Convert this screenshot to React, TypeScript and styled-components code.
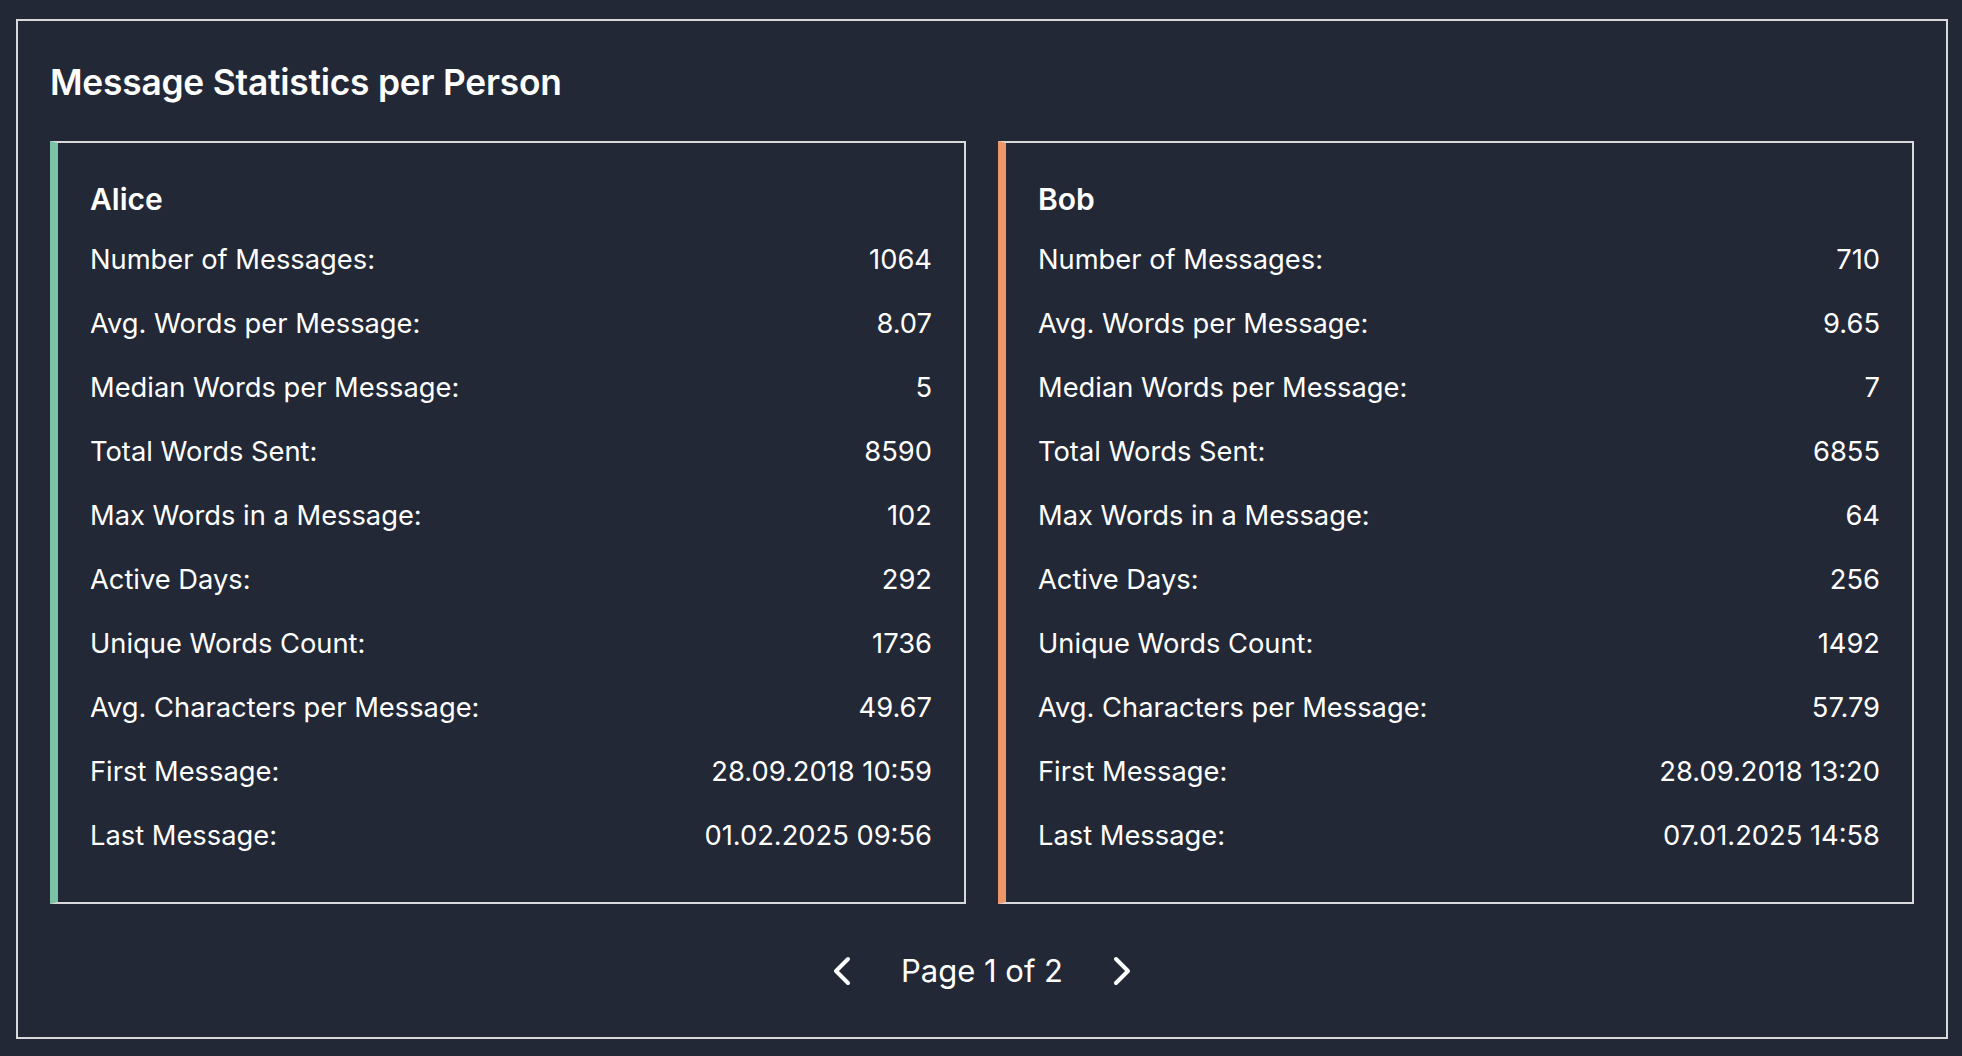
import React from "react";
import styled, { createGlobalStyle } from "styled-components";
import { ChevronLeft, ChevronRight } from "lucide-react";

const GlobalStyle = createGlobalStyle`
  html, body {
    margin: 0;
    padding: 0;
    background: #222836;
  }
  body {
    font-family: Inter, "Noto Sans", "Liberation Sans", sans-serif;
    color: #ffffff;
    -webkit-font-smoothing: antialiased;
  }
`;

const Page = styled.div`
  padding: 19px 14px 17px 16px;
`;

const Panel = styled.section`
  border: 2px solid #d9d9dc;
  padding: 32px 32px 31px;
`;

const Title = styled.h2`
  margin: 0 0 29px;
  font-size: 35.3px;
  line-height: 59px;
  font-weight: 600;
  letter-spacing: -0.2px;
  color: #ffffff;
`;

const CardGrid = styled.div`
  display: grid;
  grid-template-columns: 1fr 1fr;
  gap: 32px;
`;

const Card = styled.article<{ $accent: string }>`
  border: 2px solid #d9d9dc;
  border-left: 8px solid ${(p) => p.$accent};
  padding: 32px 32px 34px 32px;
`;

const Name = styled.h3`
  margin: 0 0 5px;
  font-size: 30px;
  line-height: 48px;
  font-weight: 600;
  color: #ffffff;
`;

const StatList = styled.dl`
  margin: 0;
`;

const StatRow = styled.div`
  display: flex;
  justify-content: space-between;
  align-items: center;
  height: 64px;
  font-size: 27.3px;
  line-height: 64px;
`;

const Label = styled.dt`
  margin: 0;
`;

const Value = styled.dd`
  margin: 0;
  text-align: right;
`;

const Pagination = styled.nav`
  display: flex;
  align-items: center;
  justify-content: center;
  gap: 35px;
  height: 70px;
  margin-top: 32px;
`;

const NavButton = styled.button`
  display: flex;
  align-items: center;
  justify-content: center;
  width: 48px;
  height: 48px;
  padding: 0;
  background: transparent;
  border: none;
  color: #ffffff;
  cursor: pointer;
`;

const PageLabel = styled.span`
  font-size: 31px;
  line-height: 70px;
`;

type Stat = [string, string];

const people: { name: string; accent: string; stats: Stat[] }[] = [
  {
    name: "Alice",
    accent: "#7cc3a5",
    stats: [
      ["Number of Messages:", "1064"],
      ["Avg. Words per Message:", "8.07"],
      ["Median Words per Message:", "5"],
      ["Total Words Sent:", "8590"],
      ["Max Words in a Message:", "102"],
      ["Active Days:", "292"],
      ["Unique Words Count:", "1736"],
      ["Avg. Characters per Message:", "49.67"],
      ["First Message:", "28.09.2018 10:59"],
      ["Last Message:", "01.02.2025 09:56"],
    ],
  },
  {
    name: "Bob",
    accent: "#ee9569",
    stats: [
      ["Number of Messages:", "710"],
      ["Avg. Words per Message:", "9.65"],
      ["Median Words per Message:", "7"],
      ["Total Words Sent:", "6855"],
      ["Max Words in a Message:", "64"],
      ["Active Days:", "256"],
      ["Unique Words Count:", "1492"],
      ["Avg. Characters per Message:", "57.79"],
      ["First Message:", "28.09.2018 13:20"],
      ["Last Message:", "07.01.2025 14:58"],
    ],
  },
];

export default function App() {
  return (
    <>
      <GlobalStyle />
      <Page>
        <Panel>
          <Title>Message Statistics per Person</Title>
          <CardGrid>
            {people.map((p) => (
              <Card key={p.name} $accent={p.accent}>
                <Name>{p.name}</Name>
                <StatList>
                  {p.stats.map(([label, value]) => (
                    <StatRow key={label}>
                      <Label>{label}</Label>
                      <Value>{value}</Value>
                    </StatRow>
                  ))}
                </StatList>
              </Card>
            ))}
          </CardGrid>
          <Pagination>
            <NavButton aria-label="Previous page">
              <ChevronLeft size={48} strokeWidth={2} />
            </NavButton>
            <PageLabel>Page 1 of 2</PageLabel>
            <NavButton aria-label="Next page">
              <ChevronRight size={48} strokeWidth={2} />
            </NavButton>
          </Pagination>
        </Panel>
      </Page>
    </>
  );
}
